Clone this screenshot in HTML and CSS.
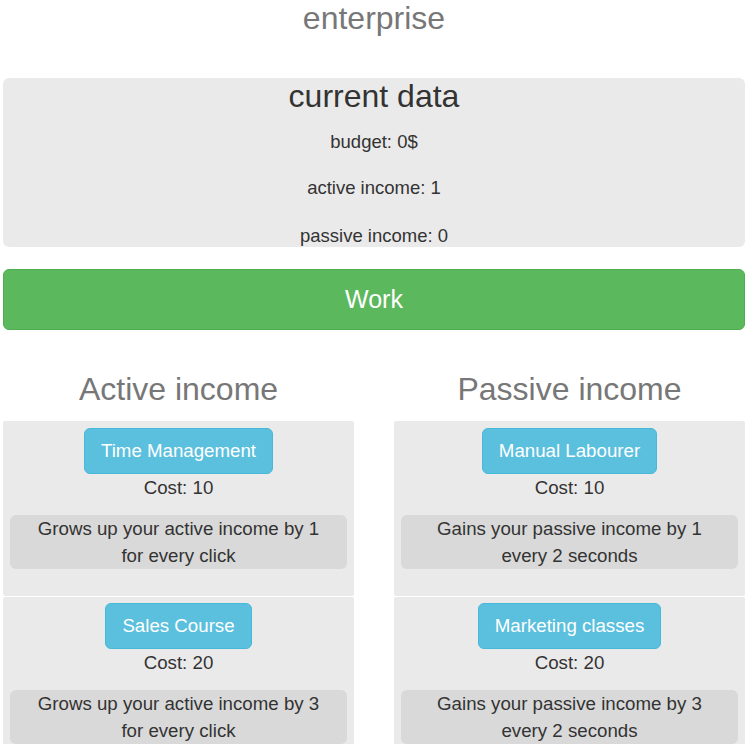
FILE: index.html
```html
<!DOCTYPE html>
<html>
<head>
<meta charset="utf-8">
<title>enterprise</title>
<link rel="stylesheet" href="styles.css">
</head>
<body>
<div class="page">
  <h1 class="title">enterprise</h1>
  <section class="data">
    <h2 class="data-title">current data</h2>
    <p class="data-line first">budget: 0$</p>
    <p class="data-line">active income: 1</p>
    <p class="data-line last">passive income: 0</p>
  </section>
  <button class="work">Work</button>
  <div class="columns">
    <div class="col">
      <h2 class="col-title">Active income</h2>
      <div class="card">
        <button class="buy">Time Management</button>
        <p class="cost">Cost: 10</p>
        <p class="desc">Grows up your active income by 1<br>for every click</p>
      </div>
      <div class="card">
        <button class="buy">Sales Course</button>
        <p class="cost">Cost: 20</p>
        <p class="desc">Grows up your active income by 3<br>for every click</p>
      </div>
    </div>
    <div class="col">
      <h2 class="col-title">Passive income</h2>
      <div class="card">
        <button class="buy">Manual Labourer</button>
        <p class="cost">Cost: 10</p>
        <p class="desc">Gains your passive income by 1<br>every 2 seconds</p>
      </div>
      <div class="card">
        <button class="buy">Marketing classes</button>
        <p class="cost">Cost: 20</p>
        <p class="desc">Gains your passive income by 3<br>every 2 seconds</p>
      </div>
    </div>
  </div>
</div>
</body>
</html>
```
FILE: styles.css
```css
html, body {
  margin: 0;
  padding: 0;
  background: #fff;
}
body {
  font-family: "Liberation Sans", Arial, sans-serif;
  color: #333;
  font-size: 18.7px;
  line-height: 27px;
}
.page {
  padding: 1px 5px 0 3px;
}
.title {
  margin: 0;
  font-size: 32px;
  font-weight: normal;
  line-height: 35px;
  color: #777;
  text-align: center;
}
.data {
  margin-top: 42px;
  height: 169px;
  background: #eaeaea;
  border-radius: 6px;
  text-align: center;
  display: flex;
  flex-direction: column;
  overflow: visible;
}
.data-title {
  margin: 0;
  padding-top: 1px;
  font-size: 32px;
  font-weight: normal;
  line-height: 35px;
  color: #333;
}
.data-line {
  margin: 19px 0 0;
  font-size: 18.5px;
  line-height: 27px;
}
.data-line.first {
  margin-top: 14px;
}
.data-line.last {
  margin-top: 21px;
}
.work {
  display: block;
  width: 100%;
  margin-top: 22px;
  height: 61px;
  background: #5cb85c;
  border: 1px solid #4cae4c;
  border-radius: 6px;
  color: #fff;
  font-family: "Liberation Sans", Arial, sans-serif;
  font-size: 25px;
  padding: 0;
}
.columns {
  display: grid;
  grid-template-columns: 1fr 1fr;
  column-gap: 40px;
  margin-top: 42px;
}
.col-title {
  margin: 0 0 14px;
  font-size: 32px;
  font-weight: normal;
  line-height: 35px;
  color: #777;
  text-align: center;
}
.card {
  background: #eaeaea;
  border-radius: 2px;
  padding: 7px 7px 27px;
  margin-bottom: 1px;
  text-align: center;
}
.card + .card {
  padding-top: 6px;
}
.buy {
  height: 46px;
  padding: 0 16px;
  background: #5bc0de;
  border: 1px solid #46b8da;
  border-radius: 6px;
  color: #fff;
  font-family: "Liberation Sans", Arial, sans-serif;
  font-size: 18.7px;
  line-height: 24px;
}
.cost {
  margin: 0 0 14px;
}
.desc {
  margin: 0;
  background: #d9d9d9;
  border-radius: 6px;
}
```
